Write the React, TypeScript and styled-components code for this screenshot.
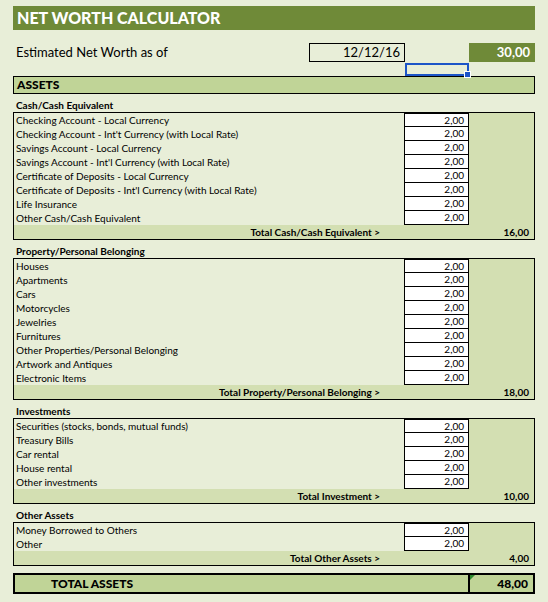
import React from 'react';
import styled, { createGlobalStyle } from 'styled-components';

const Global = createGlobalStyle`
  body { margin: 0; background: #e8eed8; font-family: Lato, "Open Sans", sans-serif; color: #000; }
`;

const Page = styled.div`
  width: 548px;
  height: 602px;
  padding: 6px 13px 0 13px;
  box-sizing: border-box;
`;

const Title = styled.div`
  width: 522px;
  height: 24px;
  background: #6f8a38;
  color: #fff;
  font-weight: 900;
  font-size: 16px;
  line-height: 24px;
  padding-left: 4px;
  box-sizing: border-box;
`;

const HeadRow = styled.div`
  display: grid;
  grid-template-columns: 296px 96px 64px 66px;
  margin-top: 13px;
  height: 19px;
  font-size: 13px;
  line-height: 18px;
`;

const HeadLabel = styled.div`
  padding-left: 3px;
`;

const DateBox = styled.div`
  border: 1px solid #000;
  text-align: right;
  padding-right: 4px;
  line-height: 16px;
`;

const NetValue = styled.div`
  background: #6f8a38;
  color: #fff;
  font-weight: 700;
  text-align: right;
  padding-right: 5px;
`;

const SelRow = styled.div`
  display: grid;
  grid-template-columns: 392px 64px;
  height: 13px;
  margin-top: 1px;
`;

const Selected = styled.div`
  border: 2px solid #1c55c8;
  box-sizing: border-box;
  position: relative;
  &::after {
    content: '';
    position: absolute;
    right: -4px;
    bottom: -4px;
    width: 5px;
    height: 5px;
    background: #1c55c8;
    border: 1px solid #fff;
  }
`;

const AssetsBar = styled.div`
  width: 522px;
  height: 18px;
  background: #c0d497;
  border: 1px solid #000;
  box-sizing: border-box;
  font-weight: 900;
  font-size: 12px;
  line-height: 16px;
  padding-left: 3px;
`;

const SectionTitle = styled.div`
  font-weight: 700;
  font-size: 10px;
  height: 14px;
  line-height: 14px;
  margin-top: 4px;
  padding-left: 3px;
`;

const Box = styled.div`
  width: 522px;
  border: 1px solid #000;
  box-sizing: border-box;
  display: grid;
  grid-template-columns: 390px 65px 1fr;
  font-size: 10px;
`;

const Label = styled.div`
  height: 14px;
  line-height: 14px;
  padding-left: 2px;
  white-space: nowrap;
`;

const Cell = styled.div<{ $first: boolean }>`
  height: 14px;
  line-height: 13px;
  background: #fff;
  border: 1px solid #000;
  border-top-width: ${(p) => (p.$first ? '1px' : '0')};
  box-sizing: border-box;
  text-align: right;
  padding-right: 4px;
`;

const Side = styled.div`
  background: #d3dfb2;
`;

const TotalRow = styled.div`
  grid-column: 1 / -1;
  display: grid;
  grid-template-columns: 1fr 120px;
  background: #d3dfb2;
  height: 14px;
  line-height: 14px;
  font-weight: 700;
`;

const TotalLabel = styled.div`
  text-align: right;
  padding-right: 34px;
`;

const TotalValue = styled.div`
  text-align: right;
  padding-right: 5px;
`;

const Grand = styled.div`
  margin-top: 7px;
  width: 522px;
  height: 21px;
  border: 2px solid #000;
  box-sizing: border-box;
  background: #c0d497;
  display: grid;
  grid-template-columns: 453px 1fr;
  font-weight: 900;
  font-size: 12px;
  line-height: 17px;
`;

const GrandLabel = styled.div`
  padding-left: 36px;
`;

const GrandValue = styled.div`
  border-left: 2px solid #000;
  text-align: right;
  padding-right: 5px;
  position: relative;
  &::before {
    content: '';
    position: absolute;
    left: 0;
    top: 0;
    border-top: 5px solid #2f8a2f;
    border-right: 5px solid transparent;
  }
`;

type Section = { title: string; items: string[]; total: string; label: string };

const sections: Section[] = [
  {
    title: 'Cash/Cash Equivalent',
    items: [
      'Checking Account - Local Currency',
      "Checking Account - Int't Currency (with Local Rate)",
      'Savings Account - Local Currency',
      "Savings Account - Int'l Currency (with Local Rate)",
      'Certificate of Deposits - Local Currency',
      "Certificate of Deposits - Int'l Currency (with Local Rate)",
      'Life Insurance',
      'Other Cash/Cash Equivalent',
    ],
    label: 'Total Cash/Cash Equivalent >',
    total: '16,00',
  },
  {
    title: 'Property/Personal Belonging',
    items: ['Houses', 'Apartments', 'Cars', 'Motorcycles', 'Jewelries', 'Furnitures', 'Other Properties/Personal Belonging', 'Artwork and Antiques', 'Electronic Items'],
    label: 'Total Property/Personal Belonging >',
    total: '18,00',
  },
  {
    title: 'Investments',
    items: ['Securities (stocks, bonds, mutual funds)', 'Treasury Bills', 'Car rental', 'House rental', 'Other investments'],
    label: 'Total Investment >',
    total: '10,00',
  },
  {
    title: 'Other Assets',
    items: ['Money Borrowed to Others', 'Other'],
    label: 'Total Other Assets >',
    total: '4,00',
  },
];

export default function App() {
  return (
    <Page>
      <Global />
      <Title>NET WORTH CALCULATOR</Title>
      <HeadRow>
        <HeadLabel>Estimated Net Worth as of</HeadLabel>
        <DateBox>12/12/16</DateBox>
        <div />
        <NetValue>30,00</NetValue>
      </HeadRow>
      <SelRow>
        <div />
        <Selected />
      </SelRow>
      <AssetsBar>ASSETS</AssetsBar>
      {sections.map((s) => (
        <React.Fragment key={s.title}>
          <SectionTitle>{s.title}</SectionTitle>
          <Box>
            {s.items.map((it, i) => (
              <React.Fragment key={it}>
                <Label>{it}</Label>
                <Cell $first={i === 0}>2,00</Cell>
                <Side />
              </React.Fragment>
            ))}
            <TotalRow>
              <TotalLabel>{s.label}</TotalLabel>
              <TotalValue>{s.total}</TotalValue>
            </TotalRow>
          </Box>
        </React.Fragment>
      ))}
      <Grand>
        <GrandLabel>TOTAL ASSETS</GrandLabel>
        <GrandValue>48,00</GrandValue>
      </Grand>
    </Page>
  );
}
